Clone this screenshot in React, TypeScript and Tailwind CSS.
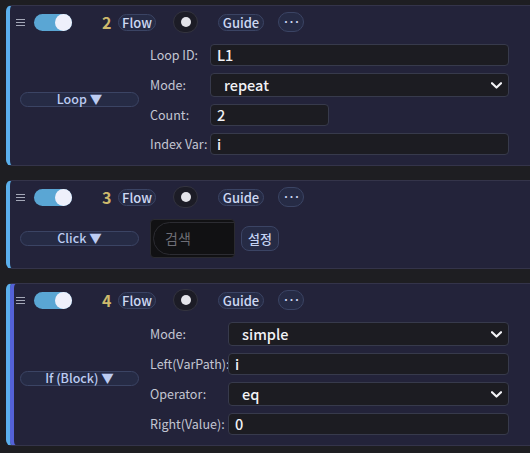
import React from "react";

const FONT = { fontFamily: '"Noto Sans CJK KR", "Noto Sans", sans-serif' };

function Hamburger() {
  return (
    <svg width="9" height="9" viewBox="0 0 9 9" className="ml-[6px] shrink-0">
      <path d="M0 1.5H9M0 4.5H9M0 7.5H9" stroke="#a4a8b8" strokeWidth="1.2" />
    </svg>
  );
}

function Toggle() {
  return (
    <div className="relative ml-[9px] h-[17px] w-[38px] shrink-0 rounded-full bg-[#5aa6d4]">
      <div className="absolute right-0 top-0 h-[17px] w-[17px] rounded-full bg-[#eef0fb]" />
    </div>
  );
}

function Pill({ children, className = "" }: { children: React.ReactNode; className?: string }) {
  return (
    <div
      className={`flex h-[17px] shrink-0 items-center justify-center rounded-full border border-[#3b4464] bg-[#262b45] text-[13px] font-medium leading-none text-[#cdd8f2] ${className}`}
    >
      {children}
    </div>
  );
}

function Header({ n }: { n: number }) {
  return (
    <div className="flex h-[22px] items-center">
      <Hamburger />
      <Toggle />
      <div className="ml-[30px] w-[9px] text-[16px] font-bold leading-none text-[#cdb96c]">{n}</div>
      <Pill className="ml-[7px] w-[38px]">Flow</Pill>
      <div className="ml-[17px] flex h-[22px] w-[25px] shrink-0 items-center justify-center rounded-full border border-[#33333f] bg-[#1c1c26]">
        <div className="h-[10px] w-[10px] rounded-full bg-[#e4e4ea]" />
      </div>
      <Pill className="ml-[20px] w-[46px]">Guide</Pill>
      <div className="ml-[14px] flex h-[20px] w-[26px] shrink-0 items-center justify-center rounded-full border border-[#3b4464] bg-[#262b45] pb-[1px] text-[11px] font-bold leading-none tracking-[-1px] text-[#cdd8f2]">
        ···
      </div>
    </div>
  );
}

function TypePill({ label }: { label: string }) {
  return (
    <div className="ml-[10px] flex w-[119px] shrink-0 items-center self-center">
      <div className="flex h-[15px] w-full items-center justify-center rounded-full border border-[#3b4464] bg-[#262b45] text-[12.5px] font-medium leading-none text-[#bcccf2]">
        {label} ▼
      </div>
    </div>
  );
}

function Chevron() {
  return (
    <svg width="11" height="7" viewBox="0 0 11 7" className="shrink-0">
      <path d="M1 1.2L5.5 5.5L10 1.2" stroke="#f2f2f6" strokeWidth="2.2" fill="none" strokeLinecap="round" strokeLinejoin="round" />
    </svg>
  );
}

function Field({
  label,
  labelW,
  value,
  select,
  inputW,
}: {
  label: string;
  labelW: string;
  value: string;
  select?: boolean;
  inputW?: string;
}) {
  return (
    <div className="flex items-center">
      <div className={`${labelW} shrink-0 whitespace-nowrap text-[12.5px] leading-none text-[#c3c6d2]`}>{label}</div>
      {select ? (
        <div className="flex h-[24px] flex-1 items-center justify-between rounded-[4px] border border-[#373a4c] bg-[#1c1c22] pl-[13px] pr-[6px] text-[14.5px] font-medium text-[#f2f2f6]">
          <span>{value}</span>
          <Chevron />
        </div>
      ) : (
        <div
          className={`flex h-[22px] ${inputW ?? "flex-1"} items-center rounded-[4px] border border-[#373a4c] bg-[#1c1c22] pl-[6px] text-[14.5px] font-medium text-[#f2f2f6]`}
        >
          {value}
        </div>
      )}
    </div>
  );
}

function Card({
  n,
  label,
  children,
  selected,
}: {
  n: number;
  label: string;
  children: React.ReactNode;
  selected?: boolean;
}) {
  return (
    <div
      className={`flex flex-col rounded-l-[6px] border-y border-[#34344a] border-l-4 border-l-[#5bb0ec] bg-[#23233a] pb-[10px] pt-[5px] ${
        selected ? "shadow-[inset_4px_0_0_#5462d8]" : ""
      }`}
    >
      <Header n={n} />
      <div className="mt-[11px] flex">
        <TypePill label={label} />
        <div className="ml-[11px] mr-[21px] flex-1">{children}</div>
      </div>
    </div>
  );
}

export default function App() {
  return (
    <div style={FONT} className="h-[453px] w-[530px] overflow-hidden bg-[#1e1e22] pl-[6px] pt-[5px]">
      <div className="flex flex-col gap-[14px]">
        <Card n={2} label="Loop">
          <div className="flex flex-col gap-[7px]">
            <Field label="Loop ID:" labelW="w-[60px]" value="L1" />
            <Field label="Mode:" labelW="w-[60px]" value="repeat" select />
            <Field label="Count:" labelW="w-[60px]" value="2" inputW="w-[119px]" />
            <Field label="Index Var:" labelW="w-[60px]" value="i" />
          </div>
        </Card>
        <Card n={3} label="Click">
          <div className="flex items-center">
            <div className="h-[39px] w-[85px] overflow-hidden rounded-[4px] border border-[#2a2a30] bg-[#111113] pl-[2px] pt-[2px]">
              <div className="flex h-[33px] w-[120px] items-center rounded-full border border-[#2c2c32] pl-[11px] text-[14px] text-[#6e6e76]">
                검색
              </div>
            </div>
            <div className="ml-[6px] flex h-[25px] w-[38px] items-center justify-center rounded-[8px] border border-[#3b4464] bg-[#262b45] text-[13px] font-medium text-[#c4d2f2]">
              설정
            </div>
          </div>
        </Card>
        <Card n={4} label="If (Block)" selected>
          <div className="flex flex-col gap-[7px]">
            <Field label="Mode:" labelW="w-[78px]" value="simple" select />
            <Field label="Left(VarPath):" labelW="w-[78px]" value="i" />
            <Field label="Operator:" labelW="w-[78px]" value="eq" select />
            <Field label="Right(Value):" labelW="w-[78px]" value="0" />
          </div>
        </Card>
      </div>
    </div>
  );
}
